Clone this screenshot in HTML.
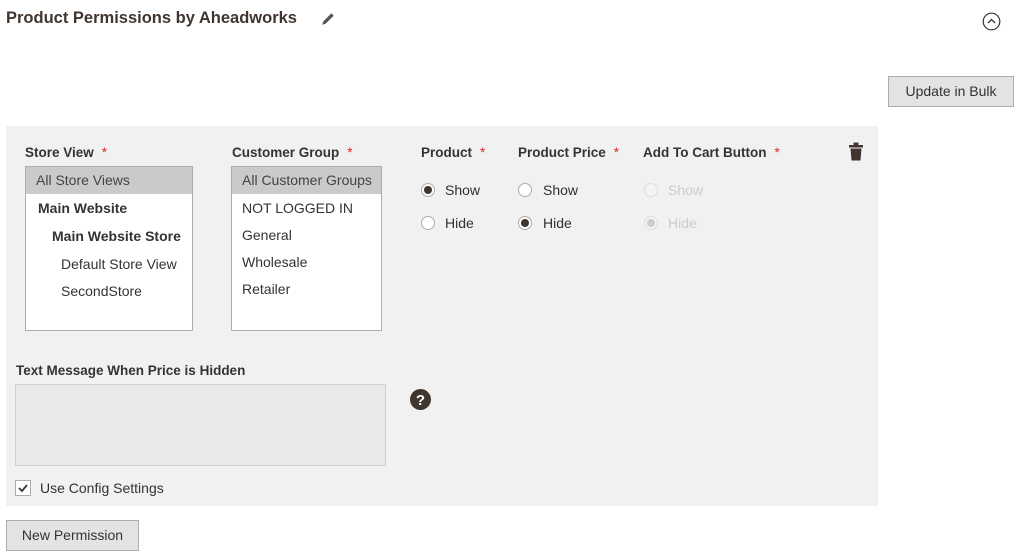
<!DOCTYPE html>
<html><head><meta charset="utf-8"><style>
*{margin:0;padding:0;box-sizing:border-box}
body{width:1024px;height:560px;background:#fff;font-family:"Liberation Sans",sans-serif;color:#303030;position:relative;overflow:hidden;font-size:14px}
.a{position:absolute;white-space:nowrap}
.lbl{font-weight:bold;font-size:13.5px;color:#333}
.st{color:#e22626;margin-left:8px;font-weight:normal}
.box{position:absolute;background:#fff;border:1px solid #adadad}
.opt{position:absolute;left:0;right:0;height:27px;line-height:27px;font-size:14px;color:#333}
.btn{position:absolute;background:#e3e3e3;border:1px solid #adadad;color:#333;font-size:14px;text-align:center}
.r{position:absolute;width:14px;height:14px;border-radius:50%;border:1px solid #adadad;background:#fff}
.r.on::after{content:"";position:absolute;left:2px;top:2px;width:8px;height:8px;border-radius:50%;background:#41362f}
.r.dis{border-color:#ddd;background:#f4f4f4}
.r.dis.on::after{background:#ccc}
</style></head><body>
<div class="a" style="left:6px;top:9px;font-size:16.5px;font-weight:bold;color:#41362f">Product Permissions by Aheadworks</div>
<svg class="a" style="left:320px;top:11px" width="16" height="16" viewBox="0 0 14 14"><path d="M2 12 L3 9 L10 2 L12 4 L5 11 Z" fill="#555"/></svg>
<svg class="a" style="left:982px;top:12px" width="19" height="19" viewBox="0 0 19 19"><circle cx="9.5" cy="9.5" r="8.3" fill="none" stroke="#333" stroke-width="1.2"/><path d="M6 11 L9.5 7.5 L13 11" fill="none" stroke="#333" stroke-width="1.3"/></svg>
<div class="btn" style="left:888px;top:76px;width:126px;height:31px;line-height:29px">Update in Bulk</div>

<div class="a" style="left:6px;top:126px;width:872px;height:380px;background:#f1f1f1"></div>

<div class="a lbl" style="left:25px;top:145px">Store View<span class="st">*</span></div>
<div class="box" style="left:25px;top:166px;width:168px;height:165px">
 <div class="opt" style="top:0;background:#cacaca;padding-left:10px;color:#444">All Store Views</div>
 <div class="opt" style="top:28px;padding-left:12px;font-weight:bold">Main Website</div>
 <div class="opt" style="top:56px;padding-left:26px;font-weight:bold">Main Website Store</div>
 <div class="opt" style="top:84px;padding-left:35px">Default Store View</div>
 <div class="opt" style="top:111px;padding-left:35px">SecondStore</div>
</div>
<div class="a lbl" style="left:232px;top:145px">Customer Group<span class="st">*</span></div>
<div class="box" style="left:231px;top:166px;width:151px;height:165px">
 <div class="opt" style="top:0;background:#cacaca;padding-left:10px;color:#444">All Customer Groups</div>
 <div class="opt" style="top:28px;padding-left:10px">NOT LOGGED IN</div>
 <div class="opt" style="top:55px;padding-left:10px">General</div>
 <div class="opt" style="top:82px;padding-left:10px">Wholesale</div>
 <div class="opt" style="top:109px;padding-left:10px">Retailer</div>
</div>

<div class="a lbl" style="left:421px;top:145px">Product<span class="st">*</span></div>
<div class="a lbl" style="left:518px;top:145px">Product Price<span class="st">*</span></div>
<div class="a lbl" style="left:643px;top:145px">Add To Cart Button<span class="st">*</span></div>
<svg class="a" style="left:849px;top:142px" width="14" height="19" viewBox="0 0 14 19"><rect x="0" y="3" width="14" height="2.5" fill="#41362f"/><rect x="4.5" y="0.5" width="5" height="3" fill="#41362f"/><path d="M1.5 6.5 H12.5 L11.5 18.5 H2.5 Z" fill="#41362f"/></svg>

<div class="r on" style="left:421px;top:183px"></div><div class="a" style="left:445px;top:182px">Show</div>
<div class="r" style="left:421px;top:216px"></div><div class="a" style="left:445px;top:215px">Hide</div>
<div class="r" style="left:518px;top:183px"></div><div class="a" style="left:543px;top:182px">Show</div>
<div class="r on" style="left:518px;top:216px"></div><div class="a" style="left:543px;top:215px">Hide</div>
<div class="r dis" style="left:644px;top:183px"></div><div class="a" style="left:668px;top:182px;color:#ccc">Show</div>
<div class="r dis on" style="left:644px;top:216px"></div><div class="a" style="left:668px;top:215px;color:#ccc">Hide</div>

<div class="a lbl" style="left:16px;top:363px">Text Message When Price is Hidden</div>
<div class="a" style="left:15px;top:384px;width:371px;height:82px;background:#e9e9e9;border:1px solid #cfcfcf"></div>
<svg class="a" style="left:410px;top:389px" width="21" height="21" viewBox="0 0 21 21"><circle cx="10.5" cy="10.5" r="10.5" fill="#41362f"/><text x="10.5" y="16" text-anchor="middle" font-family="Liberation Sans" font-weight="bold" font-size="15" fill="#fff">?</text></svg>
<div class="a" style="left:15px;top:480px;width:16px;height:16px;background:#fff;border:1px solid #adadad"></div>
<svg class="a" style="left:17px;top:482px" width="12" height="12" viewBox="0 0 12 12"><path d="M2 6 L5 9 L10 3" fill="none" stroke="#41362f" stroke-width="1.8"/></svg>
<div class="a" style="left:40px;top:480px;font-size:14px;color:#333">Use Config Settings</div>

<div class="btn" style="left:6px;top:520px;width:133px;height:31px;line-height:29px">New Permission</div>
</body></html>
